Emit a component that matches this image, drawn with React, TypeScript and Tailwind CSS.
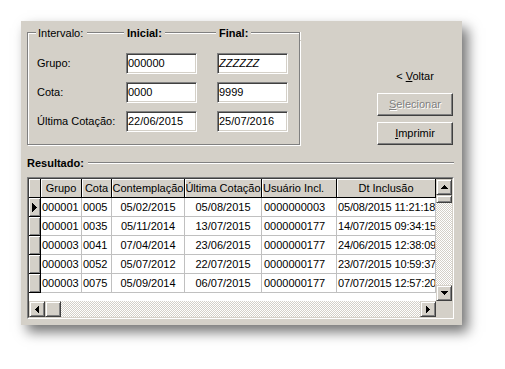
import React from "react";

type Row = [string, string, string, string, string, string];

const rows: Row[] = [
  ["000001", "0005", "05/02/2015", "05/08/2015", "0000000003", "05/08/2015 11:21:18"],
  ["000001", "0035", "05/11/2014", "13/07/2015", "0000000177", "14/07/2015 09:34:15"],
  ["000003", "0041", "07/04/2014", "23/06/2015", "0000000177", "24/06/2015 12:38:09"],
  ["000003", "0052", "05/07/2012", "22/07/2015", "0000000177", "23/07/2015 10:59:37"],
  ["000003", "0075", "05/09/2014", "06/07/2015", "0000000177", "07/07/2015 12:57:20"],
];

const cols = [
  { title: "Grupo", w: "w-[41px]", head: "text-center", cell: "pl-[1px]" },
  { title: "Cota", w: "w-[30px]", head: "text-center", cell: "pl-[1px]" },
  { title: "Contemplação", w: "w-[73px]", head: "text-center", cell: "text-center" },
  { title: "Última Cotação", w: "w-[77px]", head: "text-center", cell: "text-center" },
  { title: "Usuário Incl.", w: "w-[75px]", head: "pl-[1px]", cell: "pl-[2px]" },
  { title: "Dt Inclusão", w: "w-[99px]", head: "text-center", cell: "pl-[1px] tracking-[-0.15px]" },
];

const raised =
  "border border-t-[#d4d0c8] border-l-[#d4d0c8] border-r-[#404040] border-b-[#404040] bg-[#d4d0c8] shadow-[inset_1px_1px_0_#fff,inset_-1px_-1px_0_#808080]";
const checker =
  "bg-[repeating-conic-gradient(#d4d0c8_0%_25%,#ffffff_0%_50%)] bg-[length:2px_2px]";

function HLine({ className = "" }: { className?: string }) {
  return <div className={`h-[2px] border-t border-t-[#808080] border-b border-b-white ${className}`} />;
}

// pixel triangles, like the classic scrollbar glyphs
function Arrow({ dir }: { dir: "up" | "down" | "left" | "right" }) {
  const steps = [0, 1, 2, 3];
  if (dir === "up" || dir === "down") {
    return (
      <svg width="7" height="4" shapeRendering="crispEdges">
        {steps.map((i) => (
          <rect key={i} x={3 - i} y={dir === "up" ? i : 3 - i} width={i * 2 + 1} height="1" fill="#000" />
        ))}
      </svg>
    );
  }
  return (
    <svg width="4" height="7" shapeRendering="crispEdges">
      {steps.map((i) => (
        <rect key={i} y={3 - i} x={dir === "left" ? i : 3 - i} height={i * 2 + 1} width="1" fill="#000" />
      ))}
    </svg>
  );
}

function Field({ value, className = "" }: { value: string; className?: string }) {
  return (
    <div
      className={`h-[21px] w-[71px] bg-white border border-t-[#808080] border-l-[#808080] border-r-white border-b-white shadow-[inset_1px_1px_0_#404040,inset_-1px_-1px_0_#d4d0c8] pl-[1px] leading-[19px] ${className}`}
    >
      {value}
    </div>
  );
}

function FormRow({ label, from, to, italicTo }: { label: string; from: string; to: string; italicTo?: boolean }) {
  return (
    <div className="flex h-[21px] items-center">
      <span className="w-[89px]">{label}</span>
      <Field value={from} />
      <Field value={to} className={`ml-[20px] ${italicTo ? "italic" : ""}`} />
    </div>
  );
}

function Button({ children, disabled }: { children: React.ReactNode; disabled?: boolean }) {
  return (
    <div
      className={`h-[23px] w-[76px] flex items-center justify-center border border-t-white border-l-white border-r-[#404040] border-b-[#404040] shadow-[inset_-1px_-1px_0_#808080] ${
        disabled ? "text-[#808080] [text-shadow:1px_1px_0_#fff]" : "text-black"
      }`}
    >
      {children}
    </div>
  );
}

export default function App() {
  return (
    <div className="w-[505px] h-[369px] bg-white p-[21px] text-[11px] text-black [font-family:'Liberation_Sans',Arial,sans-serif]">
      <div className="w-[441px] h-[304px] bg-[#d4d0c8] pt-[5px] pl-[6px] shadow-[6px_7px_12px_rgba(0,0,0,0.55)]">
        <div className="flex">
          {/* Intervalo group */}
          <div className="w-[273px]">
            <div className="flex h-[14px] items-center leading-[14px]">
              <div className="flex w-[97px] items-center self-stretch">
                <div className="w-[9px] h-[8px] self-end border-l border-t border-[#808080] shadow-[inset_1px_1px_0_#fff]" />
                <span className="px-[2px]">Intervalo:</span>
                <HLine className="flex-1 ml-[2px]" />
              </div>
              <div className="flex w-[92px] items-center">
                <span className="px-[3px] font-bold">Inicial:</span>
                <HLine className="flex-1" />
              </div>
              <div className="flex flex-1 items-center self-stretch">
                <span className="px-[3px] font-bold self-center">Final:</span>
                <HLine className="flex-1 self-center" />
                <div className="w-[4px] h-[8px] self-end border-t border-r border-[#808080] shadow-[inset_0_1px_0_#fff,1px_0_0_#fff]" />
              </div>
            </div>
            <div className="h-[105px] border-l border-r border-b border-[#808080] shadow-[inset_1px_0_0_#fff,1px_1px_0_#fff] pt-[13px] pl-[9px] flex flex-col gap-[8px]">
              <FormRow label="Grupo:" from="000000" to="ZZZZZZ" italicTo />
              <FormRow label="Cota:" from="0000" to="9999" />
              <FormRow label="Última Cotação:" from="22/06/2015" to="25/07/2016" />
            </div>
          </div>

          {/* actions */}
          <div className="ml-[77px] w-[76px] flex flex-col">
            <div className="mt-[43px] h-[14px] leading-[14px] text-center">
              &lt; <u>V</u>oltar
            </div>
            <div className="mt-[10px]">
              <Button disabled>
                <u>S</u>elecionar
              </Button>
            </div>
            <div className="mt-[6px]">
              <Button>
                <u>I</u>mprimir
              </Button>
            </div>
          </div>
        </div>

        <div className="mt-[11px] w-[427px] flex h-[14px] items-center leading-[14px]">
          <span className="font-bold">Resultado:</span>
          <HLine className="flex-1 ml-[4px]" />
        </div>

        {/* grid */}
        <div className="mt-[7px] w-[427px] h-[142px] border border-t-[#808080] border-l-[#808080] border-r-white border-b-white">
          <div className="h-full w-full border border-t-[#404040] border-l-[#404040] border-r-[#d4d0c8] border-b-[#d4d0c8] flex flex-col">
            <div className="flex h-[122px]">
              <div className="w-[407px] bg-white">
                <div className="flex h-[19px]">
                  <div className="w-[12px] border-r border-b border-black bg-[#d4d0c8] shadow-[inset_1px_1px_0_#fff]" />
                  {cols.map((c) => (
                    <div
                      key={c.title}
                      className={`${c.w} ${c.head} border-r border-b border-black bg-[#d4d0c8] shadow-[inset_1px_1px_0_#fff] leading-[18px] whitespace-nowrap overflow-hidden`}
                    >
                      {c.title}
                    </div>
                  ))}
                </div>
                {rows.map((r, i) => (
                  <div key={i} className="flex h-[19px]">
                    <div className="w-[12px] flex items-center justify-center border-r border-b border-black bg-[#d4d0c8] shadow-[inset_1px_1px_0_#fff,inset_-1px_-1px_0_#808080]">
                      {i === 0 && (
                        <svg width="5" height="9" shapeRendering="crispEdges">
                          {[0, 1, 2, 3, 4].map((k) => (
                            <rect key={k} x={k} y={k} width="1" height={9 - k * 2} fill="#000" />
                          ))}
                        </svg>
                      )}
                    </div>
                    {r.map((v, j) => (
                      <div
                        key={j}
                        className={`${cols[j].w} ${cols[j].cell} border-r border-b border-[#c0c0c0] leading-[18px] whitespace-nowrap overflow-hidden`}
                      >
                        {v}
                      </div>
                    ))}
                  </div>
                ))}
              </div>
              <div className="w-[16px] flex flex-col">
                <div className={`h-[16px] flex items-center justify-center ${raised}`}>
                  <Arrow dir="up" />
                </div>
                <div className={`h-[8px] ${raised}`} />
                <div className={`flex-1 ${checker}`} />
                <div className={`h-[16px] flex items-center justify-center ${raised}`}>
                  <Arrow dir="down" />
                </div>
              </div>
            </div>
            <div className="flex h-[16px]">
              <div className="w-[407px] flex">
                <div className={`w-[16px] flex items-center justify-center ${raised}`}>
                  <Arrow dir="left" />
                </div>
                <div className={`w-[16px] ${raised}`} />
                <div className={`flex-1 ${checker}`} />
                <div className={`w-[16px] flex items-center justify-center ${raised}`}>
                  <Arrow dir="right" />
                </div>
              </div>
              <div className="w-[16px] bg-[#d4d0c8]" />
            </div>
          </div>
        </div>
      </div>
    </div>
  );
}
